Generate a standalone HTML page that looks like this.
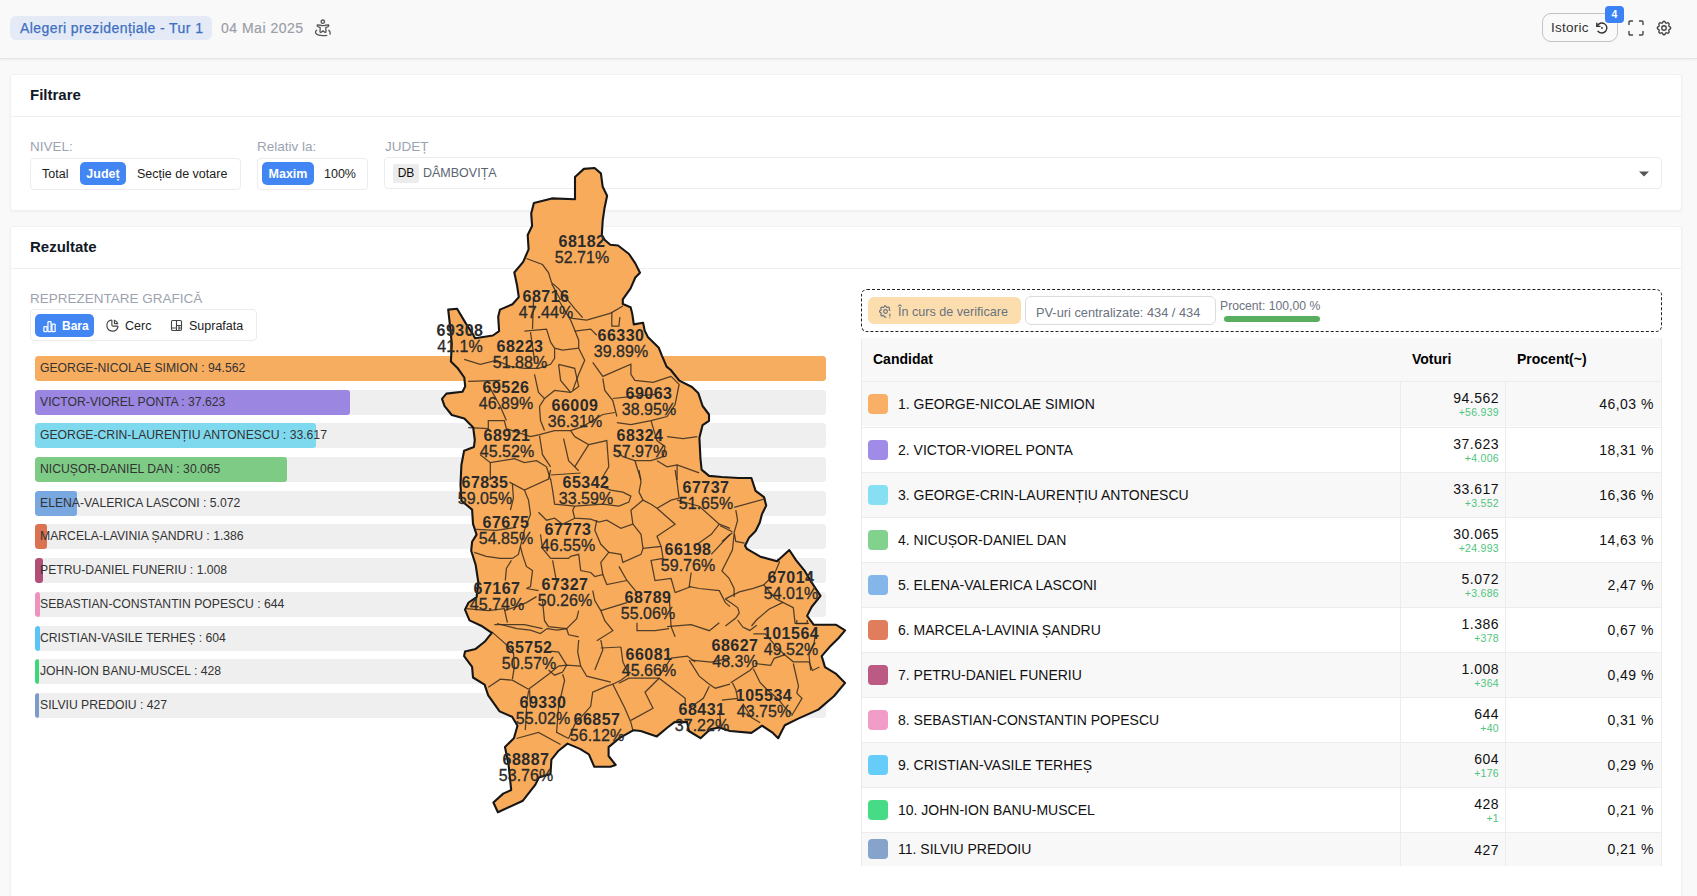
<!DOCTYPE html>
<html><head><meta charset="utf-8">
<style>
*{box-sizing:border-box;margin:0;padding:0}
html,body{width:1697px;height:896px;overflow:hidden;background:#f9f9f9;font-family:"Liberation Sans",sans-serif;color:#222}
.a{position:absolute}
.hdr{left:0;top:0;width:1697px;height:59px;background:#f9f9f9;border-bottom:1px solid #e4e4e4;box-shadow:0 1px 3px rgba(0,0,0,.05)}
.chip{left:10px;top:16px;width:202px;height:24px;background:#e4ebf7;border-radius:6px;color:#3d6fc0;font-size:14px;line-height:24px;padding-left:10px;white-space:nowrap;letter-spacing:.42px;-webkit-text-stroke:.25px #3d6fc0}
.date{left:221px;top:16px;font-size:14px;line-height:24px;color:#9aa0a8;letter-spacing:.5px;-webkit-text-stroke:.2px #9aa0a8}
.card{background:#fff;border:1px solid #f1f1f2;border-radius:3px;box-shadow:0 1px 2px rgba(0,0,0,.05)}
.ttl{font-size:15px;font-weight:bold;color:#111827}
.lbl{font-size:13.5px;color:#9ca3af;line-height:16px}
.grp{border:1px solid #ececee;border-radius:4px;height:32px;background:#fff}
.btn{font-size:12.5px;line-height:25px;height:23px;color:#222;white-space:nowrap}
.on{background:#4286f4;color:#fff;border-radius:5px;font-weight:bold}
.bar{left:35px;width:791px;height:25px;background:#efefef;border-radius:3px;overflow:hidden}
.bar i{position:absolute;left:0;top:0;height:25px;border-radius:3px}
.bar span{position:absolute;left:5px;top:0;line-height:25px;font-size:12.2px;color:#333;white-space:nowrap}
.tbl{left:861px;top:338px;width:801px}
.row{position:absolute;left:0;width:801px;border-top:1px solid #ececee}
.row.g{background:#f8f8f9}
.sq{position:absolute;left:7px;width:20px;height:20px;border-radius:4px}
.nm{position:absolute;left:37px;font-size:14px;color:#111;white-space:nowrap}
.vt{position:absolute;right:164px;text-align:right;font-size:14px;color:#111;white-space:nowrap}
.df{position:absolute;right:164px;text-align:right;font-size:9.5px;color:#4fc57c;white-space:nowrap}
.pc{position:absolute;right:9px;font-size:14px;color:#111;white-space:nowrap}
</style></head><body>
<div class="a hdr"></div>
<div class="a chip">Alegeri prezidențiale - Tur 1</div>
<div class="a date">04 Mai 2025</div>
<svg class="a" style="left:308px;top:14px" width="30" height="28" viewBox="0 0 30 28" fill="none" stroke="#555" stroke-width="1.3" stroke-linecap="round" stroke-linejoin="round"><circle cx="14.8" cy="7.7" r="1.7"/><path d="M9.6 10.8 Q13 10.9 13.8 11.7 L16.2 11.7 Q17 10.9 20.4 10.8 Q21.3 11.7 20.2 12.5 L17.8 13.7 L18 17.6 Q17.8 18.8 16.8 18.2 L15 16.9 L13.2 18.2 Q12.2 18.8 12 17.6 L12.2 13.7 L9.8 12.5 Q8.7 11.7 9.6 10.8 Z"/><path d="M8.6 16.3 C6 18.6 8 21.6 15 21.6 C16.5 21.6 17.8 21.5 18.8 21.3"/><path d="M20.8 16.3 C22 17.3 22.4 18.6 22.1 20.2"/></svg>

<!-- header right -->
<div class="a" style="left:1542px;top:13px;width:76px;height:29px;border:1px solid #c4c4c6;border-radius:9px"></div>
<div class="a" style="left:1551px;top:18px;font-size:13.5px;line-height:19px;color:#333;letter-spacing:.25px">Istoric</div>
<svg class="a" style="left:1595px;top:21px" width="14" height="14" viewBox="0 0 14 14" fill="none" stroke="#333" stroke-width="1.4" stroke-linecap="round"><path d="M2.2 5.2 A5 5 0 1 1 3 10.2"/><path d="M1.8 2.2 V5.4 H5"/><circle cx="7" cy="7" r=".9" fill="#333" stroke="none"/></svg>
<div class="a" style="left:1605px;top:6px;width:19px;height:17px;background:#3b82f6;border-radius:4px;color:#fff;font-size:10.5px;font-weight:bold;text-align:center;line-height:17px">4</div>
<svg class="a" style="left:1628px;top:20px" width="16" height="16" viewBox="0 0 16 16" fill="none" stroke="#444" stroke-width="1.4" stroke-linecap="round"><path d="M1 4.5V2.2Q1 1 2.2 1H4.5M11.5 1H13.8Q15 1 15 2.2V4.5M15 11.5V13.8Q15 15 13.8 15H11.5M4.5 15H2.2Q1 15 1 13.8V11.5"/></svg>
<svg class="a" style="left:1655px;top:19px" width="18" height="18" viewBox="0 0 24 24" fill="none" stroke="#444" stroke-width="1.8" stroke-linecap="round" stroke-linejoin="round"><path d="M10.325 4.317c.426 -1.756 2.924 -1.756 3.35 0a1.724 1.724 0 0 0 2.573 1.066c1.543 -.94 3.31 .826 2.37 2.37a1.724 1.724 0 0 0 1.065 2.572c1.756 .426 1.756 2.924 0 3.35a1.724 1.724 0 0 0 -1.066 2.573c.94 1.543 -.826 3.31 -2.37 2.37a1.724 1.724 0 0 0 -2.572 1.065c-.426 1.756 -2.924 1.756 -3.35 0a1.724 1.724 0 0 0 -2.573 -1.066c-1.543 .94 -3.31 -.826 -2.37 -2.37a1.724 1.724 0 0 0 -1.065 -2.572c-1.756 -.426 -1.756 -2.924 0 -3.35a1.724 1.724 0 0 0 1.066 -2.573c-.94 -1.543 .826 -3.31 2.37 -2.37c1 .608 2.296 .07 2.572 -1.065z"/><circle cx="12" cy="12" r="3"/></svg>

<!-- Filtrare card -->
<div class="a card" style="left:10px;top:74px;width:1672px;height:137px"></div>
<div class="a ttl" style="left:30px;top:85.5px;line-height:18px">Filtrare</div>
<div class="a" style="left:11px;top:116px;width:1670px;height:1px;background:#efeff1"></div>
<div class="a lbl" style="left:30px;top:139px">NIVEL:</div>
<div class="a grp" style="left:30px;top:158px;width:211px"></div>
<div class="a btn" style="left:42px;top:162px">Total</div>
<div class="a btn on" style="left:80px;top:162px;width:46px;text-align:center">Județ</div>
<div class="a btn" style="left:137px;top:162px">Secție de votare</div>
<div class="a lbl" style="left:257px;top:139px">Relativ la:</div>
<div class="a grp" style="left:257px;top:158px;width:111px"></div>
<div class="a btn on" style="left:262px;top:162px;width:52px;text-align:center">Maxim</div>
<div class="a btn" style="left:324px;top:162px">100%</div>
<div class="a lbl" style="left:385px;top:139px">JUDEȚ</div>
<div class="a grp" style="left:384px;top:157px;width:1278px"></div>
<div class="a" style="left:393px;top:164px;width:26px;height:19px;background:#ececec;border-radius:2px;font-size:12px;line-height:19px;text-align:center;color:#111">DB</div>
<div class="a" style="left:423px;top:164px;font-size:12.5px;line-height:19px;color:#5b6472">DÂMBOVIȚA</div>
<svg class="a" style="left:1638px;top:170px" width="12" height="8" viewBox="0 0 12 8"><path d="M1 1.5 H11 L6 6.5Z" fill="#555"/></svg>

<!-- Rezultate card -->
<div class="a card" style="left:10px;top:226px;width:1672px;height:700px"></div>
<div class="a ttl" style="left:30px;top:238px;line-height:18px">Rezultate</div>
<div class="a" style="left:11px;top:268px;width:1670px;height:1px;background:#efeff1"></div>
<div class="a lbl" style="left:30px;top:291px">REPREZENTARE GRAFICĂ</div>
<div class="a grp" style="left:30px;top:309px;width:227px"></div>
<div class="a btn on" style="left:35px;top:314px;width:59px;height:23px"></div>
<svg class="a" style="left:42px;top:319px" width="15" height="15" viewBox="0 0 24 24" fill="none" stroke="#fff" stroke-width="2" stroke-linecap="round" stroke-linejoin="round"><path d="M3 13a1 1 0 0 1 1 -1h3a1 1 0 0 1 1 1v6a1 1 0 0 1 -1 1h-3a1 1 0 0 1 -1 -1z"/><path d="M16 9a1 1 0 0 1 1 -1h3a1 1 0 0 1 1 1v10a1 1 0 0 1 -1 1h-3a1 1 0 0 1 -1 -1z"/><path d="M9.5 5a1 1 0 0 1 1 -1h3a1 1 0 0 1 1 1v14a1 1 0 0 1 -1 1h-3a1 1 0 0 1 -1 -1z"/></svg>
<div class="a btn" style="left:62px;top:314px;color:#fff;font-weight:bold;font-size:12px">Bara</div>
<svg class="a" style="left:105px;top:318px" width="15" height="15" viewBox="0 0 24 24" fill="none" stroke="#444" stroke-width="1.8" stroke-linecap="round" stroke-linejoin="round"><path d="M10 3.2a9 9 0 1 0 10.8 10.8a1 1 0 0 0 -1 -1h-6.8a2 2 0 0 1 -2 -2v-7a.9 .9 0 0 0 -1 -.8"/><path d="M15 3.5a9 9 0 0 1 5.5 5.5h-4.5a1 1 0 0 1 -1 -1v-4.5"/></svg>
<div class="a btn" style="left:125px;top:314px">Cerc</div>
<svg class="a" style="left:169px;top:318px" width="15" height="15" viewBox="0 0 24 24" fill="none" stroke="#444" stroke-width="1.8" stroke-linecap="round" stroke-linejoin="round"><path d="M4 6a2 2 0 0 1 2 -2h12a2 2 0 0 1 2 2v12a2 2 0 0 1 -2 2h-12a2 2 0 0 1 -2 -2z"/><path d="M12 4v16"/><path d="M4 16h8"/><path d="M12 12h8"/><path d="M16 12v8"/><path d="M16 16h4"/></svg>
<div class="a btn" style="left:189px;top:314px">Suprafata</div>

<div id="bars">
<div class="a bar" style="top:356px"><i style="width:791px;background:#f7ad5f"></i><span>GEORGE-NICOLAE SIMION : 94.562</span></div>
<div class="a bar" style="top:390px"><i style="width:315px;background:#9b86e2"></i><span>VICTOR-VIOREL PONTA : 37.623</span></div>
<div class="a bar" style="top:423px"><i style="width:281px;background:#7fd9ee"></i><span>GEORGE-CRIN-LAURENȚIU ANTONESCU : 33.617</span></div>
<div class="a bar" style="top:457px"><i style="width:252px;background:#7ecb86"></i><span>NICUȘOR-DANIEL DAN : 30.065</span></div>
<div class="a bar" style="top:491px"><i style="width:42px;background:#79a8e0"></i><span>ELENA-VALERICA LASCONI : 5.072</span></div>
<div class="a bar" style="top:524px"><i style="width:12px;background:#db7250"></i><span>MARCELA-LAVINIA ȘANDRU : 1.386</span></div>
<div class="a bar" style="top:558px"><i style="width:8px;background:#b24f78"></i><span>PETRU-DANIEL FUNERIU : 1.008</span></div>
<div class="a bar" style="top:592px"><i style="width:5px;background:#ee93c0"></i><span>SEBASTIAN-CONSTANTIN POPESCU : 644</span></div>
<div class="a bar" style="top:626px"><i style="width:5px;background:#5ac3f8"></i><span>CRISTIAN-VASILE TERHEȘ : 604</span></div>
<div class="a bar" style="top:659px"><i style="width:4px;background:#3ed67b"></i><span>JOHN-ION BANU-MUSCEL : 428</span></div>
<div class="a bar" style="top:693px"><i style="width:4px;background:#7d9bc7"></i><span>SILVIU PREDOIU : 427</span></div>
</div>
<div id="map">
<svg class="a" style="left:0;top:0" width="1697" height="896" viewBox="0 0 1697 896">
<polygon points="583.9,168.9 594.6,168.0 600.9,173.4 602.7,186.8 607.1,195.7 604.5,208.2 602.7,220.7 601.8,235.0 604.8,240.0 610.3,244.7 618.1,245.5 629.0,254.0 635.3,263.4 640.0,272.8 635.3,277.5 630.6,288.4 622.8,299.4 622.8,304.0 630.6,307.2 632.2,313.4 633.8,324.4 643.1,322.8 644.7,330.6 647.8,336.9 658.8,347.8 661.9,355.6 666.6,366.6 670.8,370.0 679.3,380.6 692.0,387.0 698.4,393.3 702.6,406.0 709.0,414.5 709.0,420.8 702.6,425.1 699.4,437.8 700.5,459.0 701.6,469.6 709.0,475.9 721.7,477.0 738.6,478.0 751.4,478.0 755.6,490.8 764.0,497.1 766.2,505.6 762.0,514.1 759.8,522.5 755.6,531.0 749.2,537.4 745.0,545.8 746.9,548.9 760.3,556.7 777.0,561.2 789.3,550.0 796.0,560.1 804.9,571.2 811.6,582.4 820.5,595.8 811.6,607.0 807.1,615.9 813.8,624.8 836.2,624.8 845.1,630.4 838.4,638.2 829.5,647.1 821.7,656.1 825.0,667.2 836.2,673.9 845.1,682.9 833.9,696.2 818.3,709.6 798.2,718.6 784.8,725.3 781.8,731.0 778.2,738.2 772.9,732.9 762.1,725.7 751.4,732.9 730.0,731.0 719.3,727.5 710.4,729.3 700.5,738.2 688.9,731.0 687.1,722.1 674.6,722.1 667.5,727.5 656.8,736.4 640.7,731.0 633.6,730.2 619.3,738.2 608.6,747.1 608.6,756.0 615.7,765.0 610.4,766.8 594.3,766.8 588.9,754.3 580.0,748.9 567.5,743.6 558.6,750.7 551.4,759.6 550.5,773.9 538.9,777.5 535.4,784.6 522.9,800.7 497.9,812.3 493.4,802.5 503.2,793.6 511.2,790.0 508.6,765.0 505.0,747.1 513.9,738.2 517.5,725.7 512.1,716.8 499.6,711.4 488.2,695.4 484.6,684.6 473.0,677.5 472.1,666.8 464.1,656.0 465.0,651.6 475.7,648.9 484.6,641.8 491.8,632.9 481.1,625.7 469.5,620.4 465.0,609.6 468.6,602.5 476.6,597.1 477.5,590.0 478.4,582.9 475.7,565.0 471.2,550.7 472.1,541.8 476.6,534.6 473.0,523.9 472.1,509.6 461.4,500.7 460.5,484.6 461.4,465.0 464.1,450.7 473.9,447.1 474.8,440.0 473.2,427.5 464.3,418.6 451.8,415.0 444.6,406.1 442.0,398.9 446.4,393.6 462.5,391.8 465.2,386.4 464.3,377.5 458.0,368.6 450.9,361.4 451.8,343.6 450.0,325.7 448.2,309.6 457.1,308.8 466.1,323.9 473.2,334.6 475.0,338.2 492.9,335.5 499.1,331.1 498.2,316.8 500.0,309.6 512.5,304.3 518.8,297.1 517.0,285.0 514.3,272.5 523.2,261.8 528.6,249.3 527.7,235.0 532.1,226.0 531.2,213.6 533.9,202.9 551.8,198.4 575.0,199.3 575.0,177.0" fill="#f8ac5b" stroke="none"/>
<polyline points="509.4,482.1 524.4,490.1 548.5,479.0 550.6,470.0" fill="none" stroke="#3a2e20" stroke-width="1.25" stroke-opacity=".88"/>
<polyline points="550.6,475.0 580.7,473.0" fill="none" stroke="#3a2e20" stroke-width="1.25" stroke-opacity=".88"/>
<polyline points="550.6,479.0 552.6,490.1 554.6,504.2 574.7,506.2 602.8,504.2 618.9,506.2 628.9,502.1 630.9,496.1 622.9,492.1 610.8,490.1 600.8,486.1" fill="none" stroke="#3a2e20" stroke-width="1.25" stroke-opacity=".88"/>
<polyline points="639.0,470.0 641.0,482.1 639.0,492.1 643.0,500.1 630.9,510.2 632.9,524.2 620.9,528.3 606.8,520.2 598.8,522.2 590.7,519.2 574.7,518.2 572.7,510.2 574.7,506.2" fill="none" stroke="#3a2e20" stroke-width="1.25" stroke-opacity=".88"/>
<polyline points="643.0,500.1 651.0,504.2 657.0,508.2 675.1,524.2 657.0,536.3 661.1,546.4 643.0,548.4 641.0,534.3 632.9,524.2" fill="none" stroke="#3a2e20" stroke-width="1.25" stroke-opacity=".88"/>
<polyline points="657.0,508.2 671.1,500.1 679.1,498.1 677.1,482.1 675.1,470.0" fill="none" stroke="#3a2e20" stroke-width="1.25" stroke-opacity=".88"/>
<polyline points="677.1,500.1 699.2,506.2 719.3,524.2 730.0,528.3" fill="none" stroke="#3a2e20" stroke-width="1.25" stroke-opacity=".88"/>
<polyline points="719.3,524.2 711.3,534.3 697.2,544.3" fill="none" stroke="#3a2e20" stroke-width="1.25" stroke-opacity=".88"/>
<polyline points="661.1,546.4 663.1,558.4 651.0,560.4 655.0,580.5 671.1,578.5 675.1,592.6" fill="none" stroke="#3a2e20" stroke-width="1.25" stroke-opacity=".88"/>
<polyline points="711.3,554.4 730.0,534.3" fill="none" stroke="#3a2e20" stroke-width="1.25" stroke-opacity=".88"/>
<polyline points="691.2,572.5 689.2,586.5 699.2,588.5 719.3,590.6 725.4,602.6 730.0,606.6" fill="none" stroke="#3a2e20" stroke-width="1.25" stroke-opacity=".88"/>
<polyline points="675.1,592.6 691.2,586.5" fill="none" stroke="#3a2e20" stroke-width="1.25" stroke-opacity=".88"/>
<polyline points="596.8,520.2 594.8,530.3 600.8,544.3 608.8,552.4 600.8,562.4 602.8,574.5 594.8,576.5 590.7,572.5 580.7,570.5 578.7,554.4 570.6,556.4 568.6,558.4 550.6,558.4" fill="none" stroke="#3a2e20" stroke-width="1.25" stroke-opacity=".88"/>
<polyline points="608.8,552.4 620.9,554.4 622.9,562.4 641.0,554.4 643.0,548.4" fill="none" stroke="#3a2e20" stroke-width="1.25" stroke-opacity=".88"/>
<polyline points="602.8,574.5 606.8,584.5 626.9,580.5" fill="none" stroke="#3a2e20" stroke-width="1.25" stroke-opacity=".88"/>
<polyline points="618.9,566.4 626.9,580.5 637.0,592.6" fill="none" stroke="#3a2e20" stroke-width="1.25" stroke-opacity=".88"/>
<polyline points="524.4,490.1 528.5,500.1 530.5,514.2 524.4,530.3 520.4,546.4 522.4,554.4 526.4,566.4 532.5,570.5 530.5,586.5 526.4,588.5" fill="none" stroke="#3a2e20" stroke-width="1.25" stroke-opacity=".88"/>
<polyline points="512.4,484.1 513.4,498.1 510.4,510.2" fill="none" stroke="#3a2e20" stroke-width="1.25" stroke-opacity=".88"/>
<polyline points="476.2,529.3 496.3,530.3 516.4,527.3" fill="none" stroke="#3a2e20" stroke-width="1.25" stroke-opacity=".88"/>
<polyline points="474.2,552.4 486.3,556.4 500.3,558.4 512.4,558.4 518.4,554.4 520.4,546.4" fill="none" stroke="#3a2e20" stroke-width="1.25" stroke-opacity=".88"/>
<polyline points="511.4,560.4 506.4,568.5 505.3,580.5" fill="none" stroke="#3a2e20" stroke-width="1.25" stroke-opacity=".88"/>
<polyline points="538.5,512.2 546.5,520.2 554.6,518.2 562.6,524.2 574.7,518.2" fill="none" stroke="#3a2e20" stroke-width="1.25" stroke-opacity=".88"/>
<polyline points="540.5,534.3 542.5,548.4 550.6,558.4" fill="none" stroke="#3a2e20" stroke-width="1.25" stroke-opacity=".88"/>
<polyline points="526.4,588.5 538.5,590.6" fill="none" stroke="#3a2e20" stroke-width="1.25" stroke-opacity=".88"/>
<polyline points="552.6,560.4 555.6,576.5 556.6,582.5" fill="none" stroke="#3a2e20" stroke-width="1.25" stroke-opacity=".88"/>
<polyline points="542.5,600.6 544.5,620.7 548.5,626.7 566.6,628.7 576.7,618.7 578.7,610.6" fill="none" stroke="#3a2e20" stroke-width="1.25" stroke-opacity=".88"/>
<polyline points="466.2,608.6 488.3,610.6 504.3,608.6 507.4,622.7" fill="none" stroke="#3a2e20" stroke-width="1.25" stroke-opacity=".88"/>
<polyline points="504.3,610.6 516.4,606.6 526.4,602.6 536.5,596.6" fill="none" stroke="#3a2e20" stroke-width="1.25" stroke-opacity=".88"/>
<polyline points="600.8,610.6 626.9,602.6" fill="none" stroke="#3a2e20" stroke-width="1.25" stroke-opacity=".88"/>
<polyline points="592.7,590.6 594.8,600.6 600.8,610.6 604.8,620.7 612.8,630.7 596.8,640.8" fill="none" stroke="#3a2e20" stroke-width="1.25" stroke-opacity=".88"/>
<polyline points="566.6,628.7 568.6,634.8 578.7,636.8" fill="none" stroke="#3a2e20" stroke-width="1.25" stroke-opacity=".88"/>
<polyline points="637.0,622.7 637.0,630.7 655.0,630.7 669.1,628.7" fill="none" stroke="#3a2e20" stroke-width="1.25" stroke-opacity=".88"/>
<polyline points="669.1,594.6 671.1,626.7 675.1,636.8" fill="none" stroke="#3a2e20" stroke-width="1.25" stroke-opacity=".88"/>
<polyline points="667.1,626.7 691.2,624.7 709.3,630.7 719.3,622.7" fill="none" stroke="#3a2e20" stroke-width="1.25" stroke-opacity=".88"/>
<polyline points="494.3,624.7 524.4,624.7 542.5,628.7" fill="none" stroke="#3a2e20" stroke-width="1.25" stroke-opacity=".88"/>
<polyline points="533.5,300.0 532.5,329.1" fill="none" stroke="#3a2e20" stroke-width="1.25" stroke-opacity=".88"/>
<polyline points="524.4,331.1 546.5,329.1 550.6,342.2 554.6,348.2 562.6,350.2 578.7,348.2" fill="none" stroke="#3a2e20" stroke-width="1.25" stroke-opacity=".88"/>
<polyline points="558.6,300.0 570.6,320.1 574.7,330.1 578.7,340.2 578.7,348.2" fill="none" stroke="#3a2e20" stroke-width="1.25" stroke-opacity=".88"/>
<polyline points="574.7,331.1 590.7,329.1 596.8,335.2" fill="none" stroke="#3a2e20" stroke-width="1.25" stroke-opacity=".88"/>
<polyline points="570.6,318.1 586.7,320.1 610.8,313.1 622.9,306.0" fill="none" stroke="#3a2e20" stroke-width="1.25" stroke-opacity=".88"/>
<polyline points="611.8,312.1 611.8,326.1 618.9,326.1 619.9,317.1" fill="none" stroke="#3a2e20" stroke-width="1.25" stroke-opacity=".88"/>
<polyline points="592.7,362.3 602.8,376.4 630.9,364.3 630.9,374.3 634.9,380.4 653.0,382.4 671.1,376.4" fill="none" stroke="#3a2e20" stroke-width="1.25" stroke-opacity=".88"/>
<polyline points="578.7,348.2 584.7,360.3 578.7,374.3 572.7,390.4" fill="none" stroke="#3a2e20" stroke-width="1.25" stroke-opacity=".88"/>
<polyline points="464.2,359.3 480.2,364.3 496.3,360.3 510.4,366.3 524.4,368.3 538.5,368.3 550.6,364.3 554.6,358.3 554.6,348.2" fill="none" stroke="#3a2e20" stroke-width="1.25" stroke-opacity=".88"/>
<polyline points="530.5,332.1 534.5,360.3" fill="none" stroke="#3a2e20" stroke-width="1.25" stroke-opacity=".88"/>
<polyline points="468.2,381.4 500.3,380.4" fill="none" stroke="#3a2e20" stroke-width="1.25" stroke-opacity=".88"/>
<polyline points="534.5,374.3 538.5,392.4 544.5,398.5 539.5,406.5 540.5,420.6 544.5,430.6" fill="none" stroke="#3a2e20" stroke-width="1.25" stroke-opacity=".88"/>
<polyline points="558.6,364.3 574.7,368.3 578.7,386.4 570.6,392.4 560.6,380.4 558.6,364.3" fill="none" stroke="#3a2e20" stroke-width="1.25" stroke-opacity=".88"/>
<polyline points="544.5,398.5 554.6,390.4 570.6,392.4" fill="none" stroke="#3a2e20" stroke-width="1.25" stroke-opacity=".88"/>
<polyline points="490.3,388.4 500.3,406.5 506.4,420.6" fill="none" stroke="#3a2e20" stroke-width="1.25" stroke-opacity=".88"/>
<polyline points="468.2,427.6 488.3,428.6 488.3,420.6 504.3,420.6 506.4,428.6" fill="none" stroke="#3a2e20" stroke-width="1.25" stroke-opacity=".88"/>
<polyline points="506.4,428.6 530.5,436.6 539.5,434.6 554.6,430.6 570.6,430.6 574.7,436.6" fill="none" stroke="#3a2e20" stroke-width="1.25" stroke-opacity=".88"/>
<polyline points="539.5,435.6 542.5,454.7 550.6,466.8" fill="none" stroke="#3a2e20" stroke-width="1.25" stroke-opacity=".88"/>
<polyline points="570.6,430.6 582.7,426.6 602.8,414.5 614.9,412.5" fill="none" stroke="#3a2e20" stroke-width="1.25" stroke-opacity=".88"/>
<polyline points="602.8,378.4 604.8,390.4 612.8,400.5 616.9,416.5" fill="none" stroke="#3a2e20" stroke-width="1.25" stroke-opacity=".88"/>
<polyline points="563.6,438.6 568.6,460.7 578.7,470.8" fill="none" stroke="#3a2e20" stroke-width="1.25" stroke-opacity=".88"/>
<polyline points="574.7,436.6 588.7,444.7 574.7,466.8" fill="none" stroke="#3a2e20" stroke-width="1.25" stroke-opacity=".88"/>
<polyline points="588.7,444.7 606.8,440.6 608.8,466.8 602.8,476.8" fill="none" stroke="#3a2e20" stroke-width="1.25" stroke-opacity=".88"/>
<polyline points="612.8,398.5 632.9,396.4 655.0,394.4" fill="none" stroke="#3a2e20" stroke-width="1.25" stroke-opacity=".88"/>
<polyline points="671.1,376.4 679.1,384.4 675.1,404.5 667.1,416.5 651.0,420.6 630.9,424.6 616.9,422.6" fill="none" stroke="#3a2e20" stroke-width="1.25" stroke-opacity=".88"/>
<polyline points="651.0,420.6 657.0,440.6 665.1,446.7 663.1,456.7 651.0,460.7 634.9,460.7 622.9,456.7 614.9,448.7" fill="none" stroke="#3a2e20" stroke-width="1.25" stroke-opacity=".88"/>
<polyline points="667.1,436.6 683.2,438.6 697.2,436.6" fill="none" stroke="#3a2e20" stroke-width="1.25" stroke-opacity=".88"/>
<polyline points="657.0,460.7 667.1,466.8 677.1,464.8 699.2,472.8" fill="none" stroke="#3a2e20" stroke-width="1.25" stroke-opacity=".88"/>
<polyline points="480.2,454.7 490.3,462.7 514.4,458.7 524.4,462.7 536.5,460.7 546.5,466.8" fill="none" stroke="#3a2e20" stroke-width="1.25" stroke-opacity=".88"/>
<polyline points="490.3,462.7 490.3,480.0" fill="none" stroke="#3a2e20" stroke-width="1.25" stroke-opacity=".88"/>
<polyline points="546.5,466.8 550.6,480.0" fill="none" stroke="#3a2e20" stroke-width="1.25" stroke-opacity=".88"/>
<polyline points="634.9,460.7 641.0,480.0" fill="none" stroke="#3a2e20" stroke-width="1.25" stroke-opacity=".88"/>
<polyline points="677.1,464.8 677.1,480.0" fill="none" stroke="#3a2e20" stroke-width="1.25" stroke-opacity=".88"/>
<polyline points="526.4,258.5 542.5,264.5 548.5,272.5 551.6,282.6 558.6,288.6 566.6,298.6 574.7,308.7 582.7,317.7" fill="none" stroke="#3a2e20" stroke-width="1.25" stroke-opacity=".88"/>
<polyline points="551.6,283.6 560.6,300.0" fill="none" stroke="#3a2e20" stroke-width="1.25" stroke-opacity=".88"/>
<polyline points="488.3,687.2 500.3,679.2 512.4,680.2 528.5,689.2" fill="none" stroke="#3a2e20" stroke-width="1.25" stroke-opacity=".88"/>
<polyline points="512.4,679.2 514.4,666.1 513.4,652.1" fill="none" stroke="#3a2e20" stroke-width="1.25" stroke-opacity=".88"/>
<polyline points="528.5,689.2 548.5,674.2 558.6,666.1 566.6,665.1 580.7,666.1" fill="none" stroke="#3a2e20" stroke-width="1.25" stroke-opacity=".88"/>
<polyline points="548.5,670.1 554.6,675.2 562.6,672.1 566.6,665.1 558.6,652.1 550.6,651.1" fill="none" stroke="#3a2e20" stroke-width="1.25" stroke-opacity=".88"/>
<polyline points="562.6,674.2 564.6,680.2 558.6,706.3 556.6,732.4 568.6,738.5" fill="none" stroke="#3a2e20" stroke-width="1.25" stroke-opacity=".88"/>
<polyline points="529.5,689.2 530.5,706.3" fill="none" stroke="#3a2e20" stroke-width="1.25" stroke-opacity=".88"/>
<polyline points="516.4,738.5 538.5,732.4 560.6,744.5" fill="none" stroke="#3a2e20" stroke-width="1.25" stroke-opacity=".88"/>
<polyline points="568.6,738.5 574.7,724.4 590.7,706.3 592.7,692.2 606.8,686.2 612.8,684.2 624.9,708.3 630.9,722.4 632.9,730.4" fill="none" stroke="#3a2e20" stroke-width="1.25" stroke-opacity=".88"/>
<polyline points="578.7,640.0 577.7,652.1 580.7,666.1 586.7,676.2 610.8,682.2" fill="none" stroke="#3a2e20" stroke-width="1.25" stroke-opacity=".88"/>
<polyline points="594.8,670.1 602.8,650.0 600.8,640.0" fill="none" stroke="#3a2e20" stroke-width="1.25" stroke-opacity=".88"/>
<polyline points="600.8,648.0 620.9,647.0" fill="none" stroke="#3a2e20" stroke-width="1.25" stroke-opacity=".88"/>
<polyline points="620.9,647.0 622.9,662.1 628.9,674.2 620.9,680.2 612.8,684.2" fill="none" stroke="#3a2e20" stroke-width="1.25" stroke-opacity=".88"/>
<polyline points="618.9,683.2 628.9,678.2 659.1,678.2 685.2,698.3 685.2,704.3" fill="none" stroke="#3a2e20" stroke-width="1.25" stroke-opacity=".88"/>
<polyline points="659.1,678.2 645.0,692.2 653.0,708.3 630.9,720.4" fill="none" stroke="#3a2e20" stroke-width="1.25" stroke-opacity=".88"/>
<polyline points="659.1,676.2 671.1,658.1 687.2,656.1 695.2,662.1" fill="none" stroke="#3a2e20" stroke-width="1.25" stroke-opacity=".88"/>
<polyline points="689.2,660.1 699.2,676.2 709.3,684.2 715.3,688.2 730.0,684.2" fill="none" stroke="#3a2e20" stroke-width="1.25" stroke-opacity=".88"/>
<polyline points="709.3,686.2 703.3,698.3 689.2,708.3" fill="none" stroke="#3a2e20" stroke-width="1.25" stroke-opacity=".88"/>
<polyline points="691.2,660.1 711.3,662.1 730.0,658.1" fill="none" stroke="#3a2e20" stroke-width="1.25" stroke-opacity=".88"/>
<polyline points="719.3,710.3 721.3,728.4" fill="none" stroke="#3a2e20" stroke-width="1.25" stroke-opacity=".88"/>
<polyline points="734.1,507.4 765.4,498.7" fill="none" stroke="#3a2e20" stroke-width="1.25" stroke-opacity=".88"/>
<polyline points="720.2,525.7 732.4,531.8" fill="none" stroke="#3a2e20" stroke-width="1.25" stroke-opacity=".88"/>
<polyline points="735.8,510.1 737.6,520.5 734.1,532.7 735.8,541.4 744.5,543.1" fill="none" stroke="#3a2e20" stroke-width="1.25" stroke-opacity=".88"/>
<polyline points="732.4,532.7 721.9,541.4" fill="none" stroke="#3a2e20" stroke-width="1.25" stroke-opacity=".88"/>
<polyline points="734.1,534.4 732.4,550.1 725.4,564.0 721.9,571.0 728.9,578.0 734.1,588.4 734.1,597.1" fill="none" stroke="#3a2e20" stroke-width="1.25" stroke-opacity=".88"/>
<polyline points="725.4,598.9 739.3,591.9 753.3,588.4 763.7,584.9 774.2,574.5 779.4,562.3 777.6,558.8" fill="none" stroke="#3a2e20" stroke-width="1.25" stroke-opacity=".88"/>
<polyline points="763.7,584.9 775.9,598.9 782.9,602.4 793.3,607.6 795.1,623.3 809.0,623.3" fill="none" stroke="#3a2e20" stroke-width="1.25" stroke-opacity=".88"/>
<polyline points="782.9,602.4 768.9,609.3 756.7,619.8 751.5,626.0" fill="none" stroke="#3a2e20" stroke-width="1.25" stroke-opacity=".88"/>
<polyline points="725.4,598.9 737.6,607.6 739.3,612.8 735.8,618.0 725.4,626.0" fill="none" stroke="#3a2e20" stroke-width="1.25" stroke-opacity=".88"/>
<polyline points="737.6,620.0 742.8,627.0 749.8,630.4 756.7,625.2" fill="none" stroke="#3a2e20" stroke-width="1.25" stroke-opacity=".88"/>
<polyline points="753.3,633.9 765.4,633.9 774.2,644.4 784.6,654.8" fill="none" stroke="#3a2e20" stroke-width="1.25" stroke-opacity=".88"/>
<polyline points="755.0,663.5 770.7,665.3 774.2,658.3 784.6,654.8 793.3,661.8 809.0,661.8 812.5,670.5 819.4,667.0" fill="none" stroke="#3a2e20" stroke-width="1.25" stroke-opacity=".88"/>
<polyline points="816.0,628.7 814.2,642.6 809.0,654.8 810.7,670.5" fill="none" stroke="#3a2e20" stroke-width="1.25" stroke-opacity=".88"/>
<polyline points="730.6,682.7 749.8,670.5 753.3,667.0" fill="none" stroke="#3a2e20" stroke-width="1.25" stroke-opacity=".88"/>
<polyline points="753.3,668.8 760.2,682.7 767.2,689.7 777.6,698.4 784.6,707.1 791.6,714.0" fill="none" stroke="#3a2e20" stroke-width="1.25" stroke-opacity=".88"/>
<polyline points="793.3,663.5 798.5,686.2 796.8,693.1 802.0,698.4 791.6,715.8" fill="none" stroke="#3a2e20" stroke-width="1.25" stroke-opacity=".88"/>
<polyline points="732.4,682.7 735.8,689.7 737.6,698.4 721.9,700.1" fill="none" stroke="#3a2e20" stroke-width="1.25" stroke-opacity=".88"/>
<polyline points="742.8,703.6 751.5,717.5 760.2,722.8" fill="none" stroke="#3a2e20" stroke-width="1.25" stroke-opacity=".88"/>
<polyline points="796.8,620.0 796.8,623.5 807.2,623.5 807.2,620.0" fill="none" stroke="#3a2e20" stroke-width="1.25" stroke-opacity=".88"/>
<polyline points="491.9,631.9 505.2,643.6 513.6,653.7" fill="none" stroke="#3a2e20" stroke-width="1.25" stroke-opacity=".88"/>
<polyline points="528.7,690.5 527.0,700.5 525.3,730.0" fill="none" stroke="#3a2e20" stroke-width="1.25" stroke-opacity=".88"/>
<polyline points="496.9,623.5 517.0,628.6 530.4,630.2 540.4,633.6 547.1,628.6 557.1,630.2 567.2,628.6" fill="none" stroke="#3a2e20" stroke-width="1.25" stroke-opacity=".88"/>
<polygon points="583.9,168.9 594.6,168.0 600.9,173.4 602.7,186.8 607.1,195.7 604.5,208.2 602.7,220.7 601.8,235.0 604.8,240.0 610.3,244.7 618.1,245.5 629.0,254.0 635.3,263.4 640.0,272.8 635.3,277.5 630.6,288.4 622.8,299.4 622.8,304.0 630.6,307.2 632.2,313.4 633.8,324.4 643.1,322.8 644.7,330.6 647.8,336.9 658.8,347.8 661.9,355.6 666.6,366.6 670.8,370.0 679.3,380.6 692.0,387.0 698.4,393.3 702.6,406.0 709.0,414.5 709.0,420.8 702.6,425.1 699.4,437.8 700.5,459.0 701.6,469.6 709.0,475.9 721.7,477.0 738.6,478.0 751.4,478.0 755.6,490.8 764.0,497.1 766.2,505.6 762.0,514.1 759.8,522.5 755.6,531.0 749.2,537.4 745.0,545.8 746.9,548.9 760.3,556.7 777.0,561.2 789.3,550.0 796.0,560.1 804.9,571.2 811.6,582.4 820.5,595.8 811.6,607.0 807.1,615.9 813.8,624.8 836.2,624.8 845.1,630.4 838.4,638.2 829.5,647.1 821.7,656.1 825.0,667.2 836.2,673.9 845.1,682.9 833.9,696.2 818.3,709.6 798.2,718.6 784.8,725.3 781.8,731.0 778.2,738.2 772.9,732.9 762.1,725.7 751.4,732.9 730.0,731.0 719.3,727.5 710.4,729.3 700.5,738.2 688.9,731.0 687.1,722.1 674.6,722.1 667.5,727.5 656.8,736.4 640.7,731.0 633.6,730.2 619.3,738.2 608.6,747.1 608.6,756.0 615.7,765.0 610.4,766.8 594.3,766.8 588.9,754.3 580.0,748.9 567.5,743.6 558.6,750.7 551.4,759.6 550.5,773.9 538.9,777.5 535.4,784.6 522.9,800.7 497.9,812.3 493.4,802.5 503.2,793.6 511.2,790.0 508.6,765.0 505.0,747.1 513.9,738.2 517.5,725.7 512.1,716.8 499.6,711.4 488.2,695.4 484.6,684.6 473.0,677.5 472.1,666.8 464.1,656.0 465.0,651.6 475.7,648.9 484.6,641.8 491.8,632.9 481.1,625.7 469.5,620.4 465.0,609.6 468.6,602.5 476.6,597.1 477.5,590.0 478.4,582.9 475.7,565.0 471.2,550.7 472.1,541.8 476.6,534.6 473.0,523.9 472.1,509.6 461.4,500.7 460.5,484.6 461.4,465.0 464.1,450.7 473.9,447.1 474.8,440.0 473.2,427.5 464.3,418.6 451.8,415.0 444.6,406.1 442.0,398.9 446.4,393.6 462.5,391.8 465.2,386.4 464.3,377.5 458.0,368.6 450.9,361.4 451.8,343.6 450.0,325.7 448.2,309.6 457.1,308.8 466.1,323.9 473.2,334.6 475.0,338.2 492.9,335.5 499.1,331.1 498.2,316.8 500.0,309.6 512.5,304.3 518.8,297.1 517.0,285.0 514.3,272.5 523.2,261.8 528.6,249.3 527.7,235.0 532.1,226.0 531.2,213.6 533.9,202.9 551.8,198.4 575.0,199.3 575.0,177.0" fill="none" stroke="#161616" stroke-width="2.1" stroke-linejoin="round"/>
<g font-family="Liberation Sans" text-anchor="middle" fill="#2b2b2b">
<text x="582" y="247" font-size="16" font-weight="bold" letter-spacing=".5">68182</text>
<text x="582" y="263" font-size="16" stroke="#2b2b2b" stroke-width=".3">52.71%</text>
<text x="546" y="302" font-size="16" font-weight="bold" letter-spacing=".5">68716</text>
<text x="546" y="318" font-size="16" stroke="#2b2b2b" stroke-width=".3">47.44%</text>
<text x="460" y="336" font-size="16" font-weight="bold" letter-spacing=".5">69308</text>
<text x="460" y="352" font-size="16" stroke="#2b2b2b" stroke-width=".3">41.1%</text>
<text x="520" y="352" font-size="16" font-weight="bold" letter-spacing=".5">68223</text>
<text x="520" y="368" font-size="16" stroke="#2b2b2b" stroke-width=".3">51.88%</text>
<text x="621" y="341" font-size="16" font-weight="bold" letter-spacing=".5">66330</text>
<text x="621" y="357" font-size="16" stroke="#2b2b2b" stroke-width=".3">39.89%</text>
<text x="506" y="393" font-size="16" font-weight="bold" letter-spacing=".5">69526</text>
<text x="506" y="409" font-size="16" stroke="#2b2b2b" stroke-width=".3">46.89%</text>
<text x="575" y="411" font-size="16" font-weight="bold" letter-spacing=".5">66009</text>
<text x="575" y="427" font-size="16" stroke="#2b2b2b" stroke-width=".3">36.31%</text>
<text x="649" y="399" font-size="16" font-weight="bold" letter-spacing=".5">69063</text>
<text x="649" y="415" font-size="16" stroke="#2b2b2b" stroke-width=".3">38.95%</text>
<text x="507" y="441" font-size="16" font-weight="bold" letter-spacing=".5">68921</text>
<text x="507" y="457" font-size="16" stroke="#2b2b2b" stroke-width=".3">45.52%</text>
<text x="640" y="441" font-size="16" font-weight="bold" letter-spacing=".5">68324</text>
<text x="640" y="457" font-size="16" stroke="#2b2b2b" stroke-width=".3">57.97%</text>
<text x="485" y="488" font-size="16" font-weight="bold" letter-spacing=".5">67835</text>
<text x="485" y="504" font-size="16" stroke="#2b2b2b" stroke-width=".3">59.05%</text>
<text x="586" y="488" font-size="16" font-weight="bold" letter-spacing=".5">65342</text>
<text x="586" y="504" font-size="16" stroke="#2b2b2b" stroke-width=".3">33.59%</text>
<text x="706" y="493" font-size="16" font-weight="bold" letter-spacing=".5">67737</text>
<text x="706" y="509" font-size="16" stroke="#2b2b2b" stroke-width=".3">51.65%</text>
<text x="506" y="528" font-size="16" font-weight="bold" letter-spacing=".5">67675</text>
<text x="506" y="544" font-size="16" stroke="#2b2b2b" stroke-width=".3">54.85%</text>
<text x="568" y="535" font-size="16" font-weight="bold" letter-spacing=".5">67773</text>
<text x="568" y="551" font-size="16" stroke="#2b2b2b" stroke-width=".3">46.55%</text>
<text x="688" y="555" font-size="16" font-weight="bold" letter-spacing=".5">66198</text>
<text x="688" y="571" font-size="16" stroke="#2b2b2b" stroke-width=".3">59.76%</text>
<text x="791" y="583" font-size="16" font-weight="bold" letter-spacing=".5">67014</text>
<text x="791" y="599" font-size="16" stroke="#2b2b2b" stroke-width=".3">54.01%</text>
<text x="497" y="594" font-size="16" font-weight="bold" letter-spacing=".5">67167</text>
<text x="497" y="610" font-size="16" stroke="#2b2b2b" stroke-width=".3">45.74%</text>
<text x="565" y="590" font-size="16" font-weight="bold" letter-spacing=".5">67327</text>
<text x="565" y="606" font-size="16" stroke="#2b2b2b" stroke-width=".3">50.26%</text>
<text x="648" y="603" font-size="16" font-weight="bold" letter-spacing=".5">68789</text>
<text x="648" y="619" font-size="16" stroke="#2b2b2b" stroke-width=".3">55.06%</text>
<text x="791" y="639" font-size="16" font-weight="bold" letter-spacing=".5">101564</text>
<text x="791" y="655" font-size="16" stroke="#2b2b2b" stroke-width=".3">49.52%</text>
<text x="735" y="651" font-size="16" font-weight="bold" letter-spacing=".5">68627</text>
<text x="735" y="667" font-size="16" stroke="#2b2b2b" stroke-width=".3">48.3%</text>
<text x="529" y="653" font-size="16" font-weight="bold" letter-spacing=".5">65752</text>
<text x="529" y="669" font-size="16" stroke="#2b2b2b" stroke-width=".3">50.57%</text>
<text x="649" y="660" font-size="16" font-weight="bold" letter-spacing=".5">66081</text>
<text x="649" y="676" font-size="16" stroke="#2b2b2b" stroke-width=".3">45.66%</text>
<text x="543" y="708" font-size="16" font-weight="bold" letter-spacing=".5">69330</text>
<text x="543" y="724" font-size="16" stroke="#2b2b2b" stroke-width=".3">55.02%</text>
<text x="597" y="725" font-size="16" font-weight="bold" letter-spacing=".5">66857</text>
<text x="597" y="741" font-size="16" stroke="#2b2b2b" stroke-width=".3">56.12%</text>
<text x="702" y="715" font-size="16" font-weight="bold" letter-spacing=".5">68431</text>
<text x="702" y="731" font-size="16" stroke="#2b2b2b" stroke-width=".3">37.22%</text>
<text x="764" y="701" font-size="16" font-weight="bold" letter-spacing=".5">105534</text>
<text x="764" y="717" font-size="16" stroke="#2b2b2b" stroke-width=".3">43.75%</text>
<text x="526" y="765" font-size="16" font-weight="bold" letter-spacing=".5">68887</text>
<text x="526" y="781" font-size="16" stroke="#2b2b2b" stroke-width=".3">53.76%</text>
</g></svg>
</div>
<div id="right">
<div class="a" style="left:861px;top:289px;width:801px;height:43px;border:1px dashed #222;border-radius:6px"></div>
<div class="a" style="left:868px;top:297px;width:153px;height:27px;background:#fcdeae;border-radius:6px"></div>
<svg class="a" style="left:878px;top:304px" width="15" height="15" viewBox="0 0 24 24" fill="none" stroke="#6b7280" stroke-width="1.9" stroke-linecap="round" stroke-linejoin="round"><path d="M12.5 21h-1.1a1.7 1.7 0 0 1-1.6-1.3 1.7 1.7 0 0 0-2.6-1.1c-1.5.9-3.3-.8-2.4-2.4a1.7 1.7 0 0 0-1-2.6c-1.8-.4-1.8-2.9 0-3.3a1.7 1.7 0 0 0 1-2.6c-.9-1.5.8-3.3 2.4-2.4 1 .6 2.3.1 2.6-1.1.4-1.8 2.9-1.8 3.3 0a1.7 1.7 0 0 0 2.6 1.1c1.5-.9 3.3.8 2.4 2.4a1.7 1.7 0 0 0 1 2.6"/><circle cx="12" cy="12" r="3"/><path d="M19 16v3M19 22v.01"/></svg>
<div class="a" style="left:898px;top:303.5px;font-size:12.6px;line-height:17px;color:#6b7280;white-space:nowrap">În curs de verificare</div>
<div class="a" style="left:1025px;top:296px;width:191px;height:29px;border:1px solid #dcdcdf;border-radius:6px;background:#fff"></div>
<div class="a" style="left:1036px;top:303.5px;font-size:12.8px;line-height:17px;color:#6b7280;white-space:nowrap">PV-uri centralizate: 434 / 434</div>
<div class="a" style="left:1220px;top:298px;font-size:12.2px;line-height:16px;color:#6b7280;white-space:nowrap">Procent: 100,00 %</div>
<div class="a" style="left:1224px;top:316px;width:96px;height:6px;background:#5aaf5e;border-radius:3px"></div>
<div class="a" style="left:861px;top:338px;width:801px;height:528px;background:#fff;border-left:1px solid #ececee;border-right:1px solid #ececee;border-bottom:1px solid #ececee"></div>
<div class="a" style="left:862px;top:338px;width:799px;height:43px;background:#f8f8f9"></div>
<div class="a" style="left:873px;top:351px;font-size:14px;font-weight:bold;line-height:17px;color:#000">Candidat</div>
<div class="a" style="left:1412px;top:351px;font-size:14px;font-weight:bold;line-height:17px;color:#000">Voturi</div>
<div class="a" style="left:1517px;top:351px;font-size:14px;font-weight:bold;line-height:17px;color:#000">Procent(~)</div>
<div class="row g" style="left:862px;top:381px;width:799px;height:45px;position:absolute"></div>
<div class="a sq" style="left:868px;top:394px;background:#f9b066"></div>
<div class="a" style="left:898px;top:396px;font-size:14px;line-height:17px;color:#111;white-space:nowrap">1. GEORGE-NICOLAE SIMION</div>
<div class="a" style="left:1300px;width:199px;text-align:right;top:390px;font-size:14px;line-height:17px;color:#111;letter-spacing:.5px">94.562</div>
<div class="a" style="left:1300px;width:199px;text-align:right;top:407px;font-size:10.5px;line-height:11px;color:#4fc57c;letter-spacing:.3px">+56.939</div>
<div class="a" style="left:1500px;width:154px;text-align:right;top:396px;font-size:14px;line-height:17px;color:#111;letter-spacing:.5px">46,03 %</div>
<div class="row" style="left:862px;top:427px;width:799px;height:45px;position:absolute"></div>
<div class="a sq" style="left:868px;top:440px;background:#a08be6"></div>
<div class="a" style="left:898px;top:442px;font-size:14px;line-height:17px;color:#111;white-space:nowrap">2. VICTOR-VIOREL PONTA</div>
<div class="a" style="left:1300px;width:199px;text-align:right;top:436px;font-size:14px;line-height:17px;color:#111;letter-spacing:.5px">37.623</div>
<div class="a" style="left:1300px;width:199px;text-align:right;top:453px;font-size:10.5px;line-height:11px;color:#4fc57c;letter-spacing:.3px">+4.006</div>
<div class="a" style="left:1500px;width:154px;text-align:right;top:442px;font-size:14px;line-height:17px;color:#111;letter-spacing:.5px">18,31 %</div>
<div class="row g" style="left:862px;top:472px;width:799px;height:45px;position:absolute"></div>
<div class="a sq" style="left:868px;top:485px;background:#86dff2"></div>
<div class="a" style="left:898px;top:487px;font-size:14px;line-height:17px;color:#111;white-space:nowrap">3. GEORGE-CRIN-LAURENȚIU ANTONESCU</div>
<div class="a" style="left:1300px;width:199px;text-align:right;top:481px;font-size:14px;line-height:17px;color:#111;letter-spacing:.5px">33.617</div>
<div class="a" style="left:1300px;width:199px;text-align:right;top:498px;font-size:10.5px;line-height:11px;color:#4fc57c;letter-spacing:.3px">+3.552</div>
<div class="a" style="left:1500px;width:154px;text-align:right;top:487px;font-size:14px;line-height:17px;color:#111;letter-spacing:.5px">16,36 %</div>
<div class="row" style="left:862px;top:517px;width:799px;height:45px;position:absolute"></div>
<div class="a sq" style="left:868px;top:530px;background:#82d18c"></div>
<div class="a" style="left:898px;top:532px;font-size:14px;line-height:17px;color:#111;white-space:nowrap">4. NICUȘOR-DANIEL DAN</div>
<div class="a" style="left:1300px;width:199px;text-align:right;top:526px;font-size:14px;line-height:17px;color:#111;letter-spacing:.5px">30.065</div>
<div class="a" style="left:1300px;width:199px;text-align:right;top:543px;font-size:10.5px;line-height:11px;color:#4fc57c;letter-spacing:.3px">+24.993</div>
<div class="a" style="left:1500px;width:154px;text-align:right;top:532px;font-size:14px;line-height:17px;color:#111;letter-spacing:.5px">14,63 %</div>
<div class="row g" style="left:862px;top:562px;width:799px;height:45px;position:absolute"></div>
<div class="a sq" style="left:868px;top:575px;background:#84b6ea"></div>
<div class="a" style="left:898px;top:577px;font-size:14px;line-height:17px;color:#111;white-space:nowrap">5. ELENA-VALERICA LASCONI</div>
<div class="a" style="left:1300px;width:199px;text-align:right;top:571px;font-size:14px;line-height:17px;color:#111;letter-spacing:.5px">5.072</div>
<div class="a" style="left:1300px;width:199px;text-align:right;top:588px;font-size:10.5px;line-height:11px;color:#4fc57c;letter-spacing:.3px">+3.686</div>
<div class="a" style="left:1500px;width:154px;text-align:right;top:577px;font-size:14px;line-height:17px;color:#111;letter-spacing:.5px">2,47 %</div>
<div class="row" style="left:862px;top:607px;width:799px;height:45px;position:absolute"></div>
<div class="a sq" style="left:868px;top:620px;background:#e07d5c"></div>
<div class="a" style="left:898px;top:622px;font-size:14px;line-height:17px;color:#111;white-space:nowrap">6. MARCELA-LAVINIA ȘANDRU</div>
<div class="a" style="left:1300px;width:199px;text-align:right;top:616px;font-size:14px;line-height:17px;color:#111;letter-spacing:.5px">1.386</div>
<div class="a" style="left:1300px;width:199px;text-align:right;top:633px;font-size:10.5px;line-height:11px;color:#4fc57c;letter-spacing:.3px">+378</div>
<div class="a" style="left:1500px;width:154px;text-align:right;top:622px;font-size:14px;line-height:17px;color:#111;letter-spacing:.5px">0,67 %</div>
<div class="row g" style="left:862px;top:652px;width:799px;height:45px;position:absolute"></div>
<div class="a sq" style="left:868px;top:665px;background:#bb5a82"></div>
<div class="a" style="left:898px;top:667px;font-size:14px;line-height:17px;color:#111;white-space:nowrap">7. PETRU-DANIEL FUNERIU</div>
<div class="a" style="left:1300px;width:199px;text-align:right;top:661px;font-size:14px;line-height:17px;color:#111;letter-spacing:.5px">1.008</div>
<div class="a" style="left:1300px;width:199px;text-align:right;top:678px;font-size:10.5px;line-height:11px;color:#4fc57c;letter-spacing:.3px">+364</div>
<div class="a" style="left:1500px;width:154px;text-align:right;top:667px;font-size:14px;line-height:17px;color:#111;letter-spacing:.5px">0,49 %</div>
<div class="row" style="left:862px;top:697px;width:799px;height:45px;position:absolute"></div>
<div class="a sq" style="left:868px;top:710px;background:#f29cc8"></div>
<div class="a" style="left:898px;top:712px;font-size:14px;line-height:17px;color:#111;white-space:nowrap">8. SEBASTIAN-CONSTANTIN POPESCU</div>
<div class="a" style="left:1300px;width:199px;text-align:right;top:706px;font-size:14px;line-height:17px;color:#111;letter-spacing:.5px">644</div>
<div class="a" style="left:1300px;width:199px;text-align:right;top:723px;font-size:10.5px;line-height:11px;color:#4fc57c;letter-spacing:.3px">+40</div>
<div class="a" style="left:1500px;width:154px;text-align:right;top:712px;font-size:14px;line-height:17px;color:#111;letter-spacing:.5px">0,31 %</div>
<div class="row g" style="left:862px;top:742px;width:799px;height:45px;position:absolute"></div>
<div class="a sq" style="left:868px;top:755px;background:#66ccfa"></div>
<div class="a" style="left:898px;top:757px;font-size:14px;line-height:17px;color:#111;white-space:nowrap">9. CRISTIAN-VASILE TERHEȘ</div>
<div class="a" style="left:1300px;width:199px;text-align:right;top:751px;font-size:14px;line-height:17px;color:#111;letter-spacing:.5px">604</div>
<div class="a" style="left:1300px;width:199px;text-align:right;top:768px;font-size:10.5px;line-height:11px;color:#4fc57c;letter-spacing:.3px">+176</div>
<div class="a" style="left:1500px;width:154px;text-align:right;top:757px;font-size:14px;line-height:17px;color:#111;letter-spacing:.5px">0,29 %</div>
<div class="row" style="left:862px;top:787px;width:799px;height:45px;position:absolute"></div>
<div class="a sq" style="left:868px;top:800px;background:#46dc86"></div>
<div class="a" style="left:898px;top:802px;font-size:14px;line-height:17px;color:#111;white-space:nowrap">10. JOHN-ION BANU-MUSCEL</div>
<div class="a" style="left:1300px;width:199px;text-align:right;top:796px;font-size:14px;line-height:17px;color:#111;letter-spacing:.5px">428</div>
<div class="a" style="left:1300px;width:199px;text-align:right;top:813px;font-size:10.5px;line-height:11px;color:#4fc57c;letter-spacing:.3px">+1</div>
<div class="a" style="left:1500px;width:154px;text-align:right;top:802px;font-size:14px;line-height:17px;color:#111;letter-spacing:.5px">0,21 %</div>
<div class="row g" style="left:862px;top:832px;width:799px;height:34px;position:absolute"></div>
<div class="a sq" style="left:868px;top:839px;background:#86a3cc"></div>
<div class="a" style="left:898px;top:841px;font-size:14px;line-height:17px;color:#111;white-space:nowrap">11. SILVIU PREDOIU</div>
<div class="a" style="left:1300px;width:199px;text-align:right;top:842px;font-size:14px;line-height:17px;color:#111;letter-spacing:.5px">427</div>
<div class="a" style="left:1500px;width:154px;text-align:right;top:841px;font-size:14px;line-height:17px;color:#111;letter-spacing:.5px">0,21 %</div>
<div class="a" style="left:1400px;top:381px;width:1px;height:485px;background:#ececee"></div>
<div class="a" style="left:1505px;top:381px;width:1px;height:485px;background:#ececee"></div>
</div>
</body></html>
